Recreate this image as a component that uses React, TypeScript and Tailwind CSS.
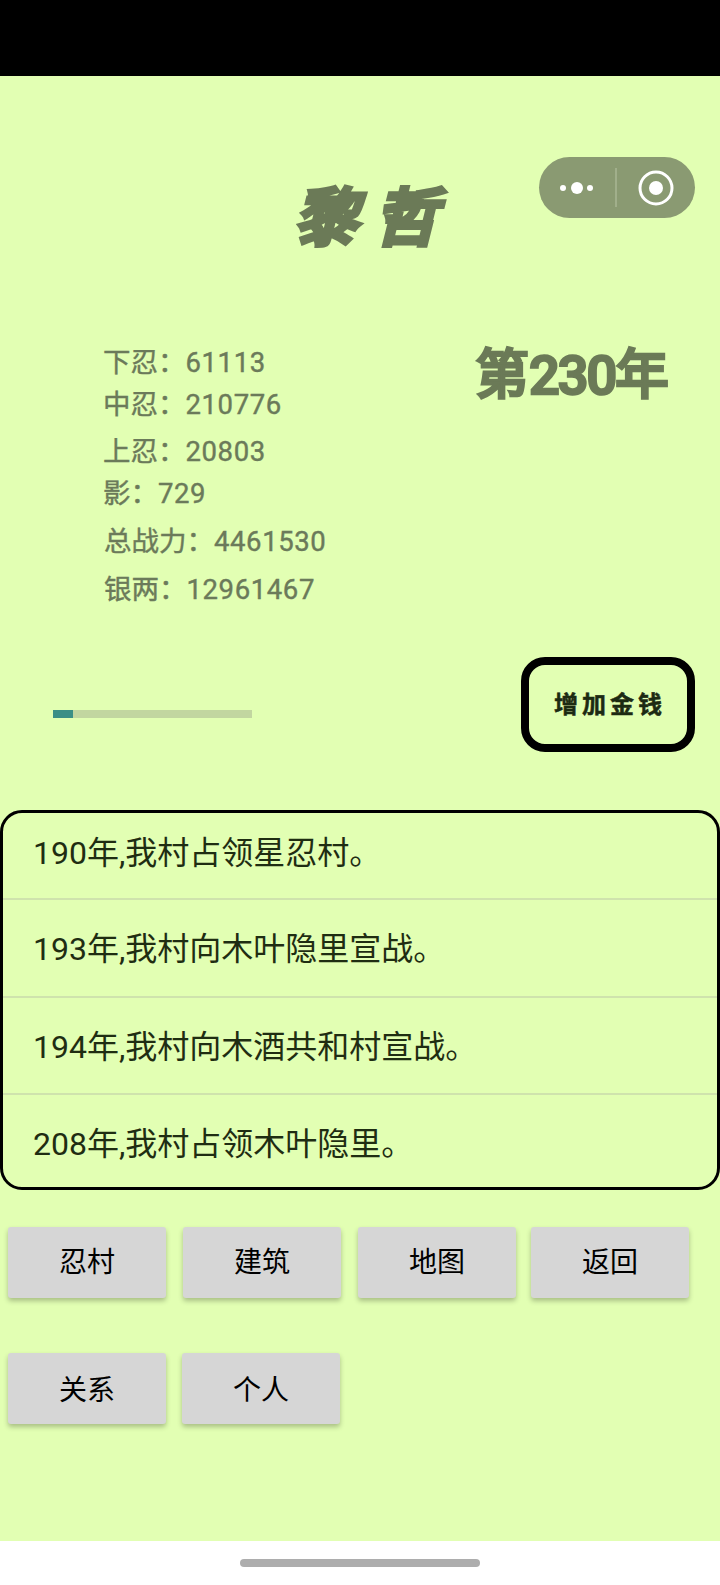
import React from 'react';

const stats = [
  { label: '下忍：', value: '61113', cls: 'h-[42px] pl-[103px]' },
  { label: '中忍：', value: '210776', cls: 'h-[47px] pl-[103px]' },
  { label: '上忍：', value: '20803', cls: 'h-[42px] pl-[103px]' },
  { label: '影：', value: '729', cls: 'h-[48px] pl-[103px]' },
  { label: '总战力：', value: '4461530', cls: 'h-[48px] pl-[104px]' },
  { label: '银两：', value: '12961467', cls: 'h-[42px] pl-[104px]' },
];

const events = [
  { text: '190年,我村占领星忍村。', cls: 'h-[87px] pb-[6px] border-b-2' },
  { text: '193年,我村向木叶隐里宣战。', cls: 'h-[98px] pt-[2px] border-b-2' },
  { text: '194年,我村向木酒共和村宣战。', cls: 'h-[97px] pt-[2px] border-b-2' },
  { text: '208年,我村占领木叶隐里。', cls: 'h-[92px] pt-[6px]' },
];

const MenuButton = ({ label, className = '' }: { label: string; className?: string }) => (
  <button className={`w-[158px] h-[71px] bg-[#d6d6d6] rounded-[3px] text-[28px] text-black shadow-[0_3px_5px_rgba(0,0,0,0.25)] ${className}`}>
    {label}
  </button>
);

const App: React.FC = () => {
  return (
    <div className="relative w-[720px] h-[1585px] flex flex-col bg-[#e2ffb3] overflow-hidden font-['Roboto','Noto_Sans_CJK_SC',sans-serif]">
      <div className="h-[76px] bg-black shrink-0" />

      {/* capsule */}
      <div className="absolute left-[539px] top-[157px] w-[156px] h-[61px] rounded-full bg-[#8a9a72] flex items-center">
        <svg width="156" height="61" viewBox="0 0 156 61" fill="none">
          <circle cx="24" cy="31" r="3" fill="#fff" />
          <circle cx="38" cy="31" r="6" fill="#fff" />
          <circle cx="51" cy="31" r="3" fill="#fff" />
          <line x1="77" y1="11" x2="77" y2="50" stroke="#a9b694" strokeWidth="1.5" />
          <circle cx="117" cy="31" r="16" stroke="#fff" strokeWidth="3" />
          <circle cx="117" cy="31" r="7" fill="#fff" />
        </svg>
      </div>

      {/* the jagged wordmark comes from a mitred stroke, which only svg text can do */}
      <div className="h-[265px] shrink-0 pt-[88px] pl-[250px]">
        <svg width="260" height="120" viewBox="0 0 260 120">
          <text
            x="0"
            y="0"
            transform="translate(45 76) skewX(-14)"
            fill="#6b7a57"
            stroke="#6b7a57"
            strokeWidth="6"
            strokeLinejoin="miter"
            strokeMiterlimit={30}
            fontSize="62"
            fontWeight="400"
            letterSpacing="18"
            fontFamily="'Noto Sans CJK SC', sans-serif"
          >
            黎哲
          </text>
        </svg>
      </div>

      <div className="flex h-[316px] shrink-0">
        <div className="w-[470px] pt-[1px] text-[27.5px] leading-[42px] text-[#6b7a5a] [-webkit-text-stroke:0.4px_#6b7a5a]">
          {stats.map((s) => (
            <div key={s.label} className={s.cls}>
              {s.label}
              <span className="tracking-[0.6px]">{s.value}</span>
            </div>
          ))}
        </div>
        <div className="pl-[5px] pt-[5px] text-[54px] leading-[60px] font-medium text-[#6b7a57] [-webkit-text-stroke:2.5px_#6b7a57] whitespace-nowrap">
          第<span className="tracking-[-2px]">230</span>年
        </div>
      </div>

      <div className="flex items-center h-[95px] shrink-0 pl-[53px] pr-[25px] justify-between">
        <div className="w-[199px] h-[8px] mt-[18px] bg-[#c2d6a0]">
          <div className="w-[20px] h-full bg-[#3b8f86]" />
        </div>
        <div className="w-[174px] h-[95px] pl-[4px] border-[8px] border-black rounded-[24px] flex items-center justify-center text-[24px] tracking-[4px] font-bold text-[#1c2a12] [-webkit-text-stroke:0.5px_#1c2a12]">
          增加金钱
        </div>
      </div>

      <div className="mt-[58px] w-[720px] h-[380px] shrink-0 border-[3px] border-black rounded-[22px] flex flex-col">
        {events.map((e) => (
          <div
            key={e.text}
            className={`pl-[30px] flex items-center text-[32px] text-[#1f2d12] border-[#cfe3ad] ${e.cls}`}
          >
            {e.text}
          </div>
        ))}
      </div>

      <div className="mt-[37px] pl-[8px] flex gap-[17px]">
        <MenuButton label="忍村" />
        <MenuButton label="建筑" />
        <MenuButton label="地图" />
        <MenuButton label="返回" className="-ml-[2px]" />
      </div>
      <div className="mt-[55px] pl-[8px] flex gap-[17px]">
        <MenuButton label="关系" className="pt-[4px]" />
        <MenuButton label="个人" className="-ml-px pt-[4px]" />
      </div>

      <div className="mt-auto h-[44px] bg-white flex items-center justify-center shrink-0">
        <div className="w-[240px] h-[8px] rounded-full bg-[#adadad]" />
      </div>
    </div>
  );
};

export default App;
